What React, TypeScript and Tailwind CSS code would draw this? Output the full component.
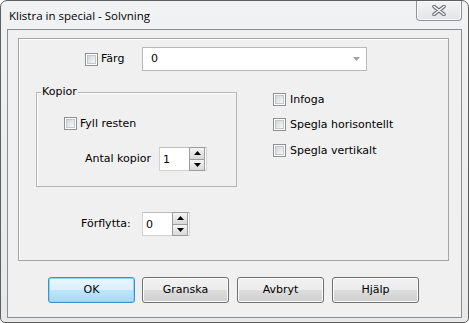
import React from "react";

function Check() {
  return (
    <span className="flex h-[13px] w-[13px] shrink-0 border border-[#8e8f8f] bg-white p-px">
      <span className="flex-1 border border-[#c3c5c8] bg-gradient-to-br from-[#d3d5d8] to-[#f8f8f8]" />
    </span>
  );
}

function Arrow({ up }: { up?: boolean }) {
  return (
    <svg width="7" height="4" viewBox="0 0 7 4">
      <path d={up ? "M0 4h7L3.5 0z" : "M0 0h7L3.5 4z"} fill="#000" />
    </svg>
  );
}

function Spin({ value }: { value: string }) {
  return (
    <div className="flex h-[24px] w-[48px] items-center border border-[#d2d2d2] border-t-[#bdbdbd] bg-white">
      <span className="flex-1 pl-[3px] text-[11px] leading-none">{value}</span>
      <div className="mr-px flex h-[24px] w-[16px] flex-col">
        <div className="flex flex-1 items-center justify-center border border-[#9c9c9c] bg-gradient-to-b from-[#f4f4f4] to-[#d9d9d9]">
          <Arrow up />
        </div>
        <div className="flex flex-1 items-center justify-center border border-t-0 border-[#9c9c9c] bg-gradient-to-b from-[#f4f4f4] to-[#d9d9d9]">
          <Arrow />
        </div>
      </div>
    </div>
  );
}

function Btn({ label, primary }: { label: string; primary?: boolean }) {
  return (
    <button
      className={
        primary
          ? "h-[26px] w-[87px] rounded-[3px] border border-[#3c8fd0] bg-[linear-gradient(to_bottom,#eaf6fd_0%,#d9f0fc_50%,#bee6fd_50%,#a7d9f5_100%)] text-[11px] shadow-[inset_0_0_0_1px_#8ed4f7]"
          : "h-[26px] w-[87px] rounded-[3px] border border-[#707070] bg-[linear-gradient(to_bottom,#f2f2f2_0%,#ebebeb_50%,#dddddd_50%,#cfcfcf_100%)] text-[11px] shadow-[inset_0_0_0_1px_#fcfcfc]"
      }
    >
      {label}
    </button>
  );
}

function CheckRow({ label }: { label: string }) {
  return (
    <div className="flex h-[13px] items-center gap-[4px]">
      <Check />
      <span className="text-[11px] leading-[13px]">{label}</span>
    </div>
  );
}

export default function App() {
  return (
    <div className="flex h-[323px] w-[469px] flex-col overflow-hidden rounded-t-[7px] rounded-b-[5px] border border-[#5f5f5f] bg-[linear-gradient(to_bottom,#f1f2f3,#e6e8ea)] font-['DejaVu_Sans',sans-serif] text-[11px] text-black">
      {/* title bar */}
      <div className="flex h-[28px] shrink-0 items-start">
        <span className="pl-[8px] pt-[6px] font-['Open_Sans',sans-serif] text-[11.5px]">
          Klistra in special - Solvning
        </span>
        <div className="ml-auto mr-[6px] flex h-[20px] w-[46px] items-center justify-center rounded-b-[4px] border border-t-0 border-[#8f9397] bg-gradient-to-b from-[#f3f4f5] to-[#e2e4e6] shadow-[inset_0_0_0_1px_#fafafa]">
          <svg width="14" height="11" viewBox="0 0 14 11">
            <path
              d="M2 1.5L7 5.5M7 5.5L12 1.5M7 5.5L2 9.5M7 5.5L12 9.5"
              stroke="#6b6f74"
              strokeWidth="3.6"
              strokeLinecap="round"
            />
            <path
              d="M2 1.5L7 5.5M7 5.5L12 1.5M7 5.5L2 9.5M7 5.5L12 9.5"
              stroke="#fbfbfb"
              strokeWidth="1.6"
              strokeLinecap="round"
            />
          </svg>
        </div>
      </div>

      {/* client area */}
      <div className="mx-[6px] h-[289px] shrink-0 border border-[#8a8d91] bg-[#f0f0f0]">
        <div className="ml-[10px] mt-[8px] h-[223px] w-[431px] border border-[#a5a5a5] shadow-[inset_1px_1px_0_#fff]">
          {/* row 1 */}
          <div className="flex items-center pl-[66px] pt-[8px]">
            <div className="flex w-[57px] items-center gap-[3px]">
              <Check />
              <span>Färg</span>
            </div>
            <div className="flex h-[24px] w-[225px] items-center border border-[#b9b9b9] bg-white pl-[8px] pr-[6px]">
              <span className="flex-1">0</span>
              <svg width="7" height="4" viewBox="0 0 7 4">
                <path d="M0 0h7L3.5 4z" fill="#a2a2a2" />
              </svg>
            </div>
          </div>

          {/* row 2 */}
          <div className="mt-[21px] flex pl-[17px]">
            <div className="relative h-[95px] w-[201px] border border-[#b5b5b5] shadow-[inset_1px_1px_0_#fff]">
              <span className="absolute left-[4px] top-[-8px] bg-[#f0f0f0] px-[1px] leading-[13px]">
                Kopior
              </span>
              <div className="flex h-[13px] items-center gap-[3px] pl-[27px] mt-[24px]">
                <Check />
                <span className="leading-[13px]">Fyll resten</span>
              </div>
              <div className="mt-[17px] flex items-center pl-[48px]">
                <span className="w-[74px]">Antal kopior</span>
                <Spin value="1" />
              </div>
            </div>
            <div className="ml-[36px] mt-[1px] flex flex-col gap-[12px]">
              <CheckRow label="Infoga" />
              <CheckRow label="Spegla horisontellt" />
              <div className="mt-px">
                <CheckRow label="Spegla vertikalt" />
              </div>
            </div>
          </div>

          {/* row 3 */}
          <div className="mt-[25px] flex items-center pl-[62px]">
            <span className="w-[61px]">Förflytta:</span>
            <Spin value="0" />
          </div>
        </div>

        {/* buttons */}
        <div className="mt-[16px] flex pl-[40px]">
          <Btn label="OK" primary />
          <div className="ml-[7px]">
            <Btn label="Granska" />
          </div>
          <div className="ml-[8px]">
            <Btn label="Avbryt" />
          </div>
          <div className="ml-[8px]">
            <Btn label="Hjälp" />
          </div>
        </div>
      </div>
    </div>
  );
}
